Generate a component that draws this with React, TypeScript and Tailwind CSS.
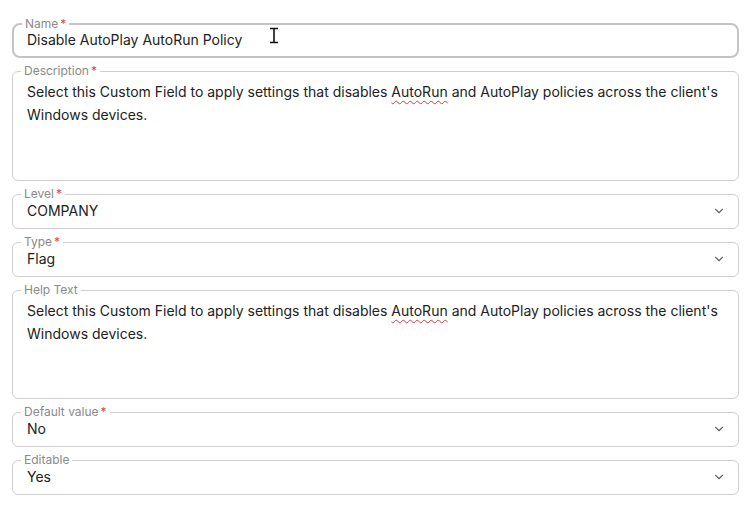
import { ChevronDown } from 'lucide-react'

const font = { fontFamily: 'Inter, "Noto Sans", sans-serif' }

function Legend({ label, required }: { label: string; required?: boolean }) {
  return (
    <legend className="ml-[8px] px-[3px] text-[12px] leading-[12px] text-[#8a8a8a]">
      {label}
      {required && <span className="ml-[2px] text-[#d9454f]">*</span>}
    </legend>
  )
}

function SelectField({ label, value, required }: { label: string; value: string; required?: boolean }) {
  return (
    <fieldset className="rounded-[6px] border border-[#cfcfcf] pb-[7px]">
      <Legend label={label} required={required} />
      <div className="mt-[1px] flex items-center pl-[14px] pr-[12px] text-[14px] leading-[20px] text-[#222]">
        <span className="flex-1">{value}</span>
        <ChevronDown size={14} strokeWidth={2} className="text-[#666]" />
      </div>
    </fieldset>
  )
}

function TextArea({ label, required, height }: { label: string; required?: boolean; height: string }) {
  return (
    <fieldset className="rounded-[6px] border border-[#cfcfcf]">
      <Legend label={label} required={required} />
      <div className={`${height} pl-[14px] pr-[12px] pt-[3px] text-[14px] leading-[23px] text-[#222]`}>
        Select this Custom Field to apply settings that disables{' '}
        <span className="underline decoration-wavy decoration-[#e0383e] underline-offset-[3px] decoration-1">AutoRun</span>{' '}
        and AutoPlay policies across the client's Windows devices.
      </div>
    </fieldset>
  )
}

export default function App() {
  return (
    <div className="min-h-screen bg-white" style={font}>
      <div className="flex flex-col gap-[7px] pl-[12px] pr-[13px] pt-[18px]">
        <div className="relative">
          <fieldset className="rounded-[8px] border-2 border-[#c4c4c4] pb-[6px]">
            <Legend label="Name" required />
            <div className="pl-[13px] text-[14px] leading-[20px] text-[#222]">Disable AutoPlay AutoRun Policy</div>
          </fieldset>
          <svg className="absolute left-[256px] top-[9px]" width="12" height="17" viewBox="0 0 12 17">
            <path d="M2 1.5h8M2 15.5h8M6 1.5v14" stroke="#111" strokeWidth="1.6" fill="none" />
          </svg>
        </div>
        <TextArea label="Description" required height="h-[103px]" />
        <SelectField label="Level" value="COMPANY" required />
        <SelectField label="Type" value="Flag" required />
        <TextArea label="Help Text" height="h-[102px]" />
        <SelectField label="Default value" value="No" required />
        <SelectField label="Editable" value="Yes" />
      </div>
    </div>
  )
}
